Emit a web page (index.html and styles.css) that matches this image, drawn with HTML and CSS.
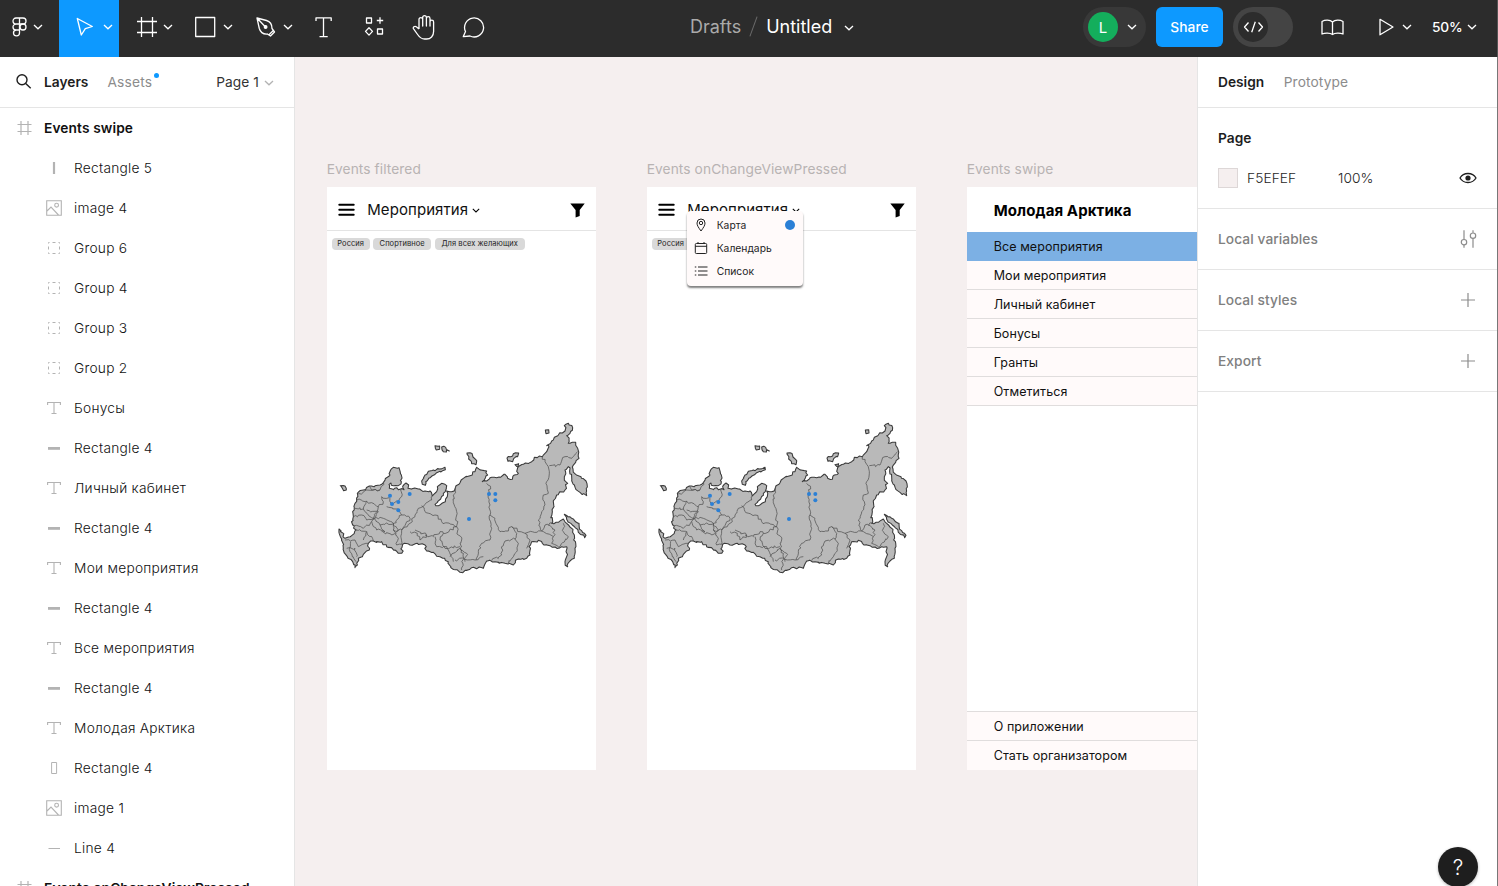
FILE: index.html
```html
<!DOCTYPE html>
<html lang="en">
<head>
<meta charset="utf-8">
<title>Untitled</title>
<link rel="stylesheet" href="styles.css">
</head>
<body>
<svg class="defs" aria-hidden="true">
  <symbol id="chev" viewBox="0 0 10 6"><path d="M1 1l4 3.8L9 1" fill="none" stroke="currentColor" stroke-width="1.3"/></symbol>
  <symbol id="hash" viewBox="0 0 16 16"><path d="M5 1v14M12 1v14M1.500 4.500h14M1.500 11.500h14" fill="none" stroke="currentColor" stroke-width="1.2"/></symbol>
  <symbol id="image" viewBox="0 0 16 16"><g fill="none" stroke="currentColor" stroke-width="1.1"><path d="M.7.7h14.6v14.6H.7zM1 11l4-4 7.5 8"/><circle cx="10.6" cy="5.2" r="1.9"/></g></symbol>
  <symbol id="group" viewBox="0 0 16 16"><path d="M2.500 3.500v-1h1M12.500 2.500h1v1M13.500 12.500v1h-1M3.500 13.500h-1v-1M6.500 2.500h3M6.500 13.500h3M2.500 6.500v3M13.500 6.500v3" fill="none" stroke="currentColor"/></symbol>
  <symbol id="text" viewBox="0 0 16 16"><path d="M1.600 5V2.500h12.800V5M8 2.500v11.300M5.500 13.500h5" fill="none" stroke="currentColor" stroke-width="1.100"/></symbol>
  <symbol id="vbar" viewBox="0 0 16 16"><path d="M8 2v12" stroke="currentColor" stroke-width="2.200"/></symbol>
  <symbol id="hbar" viewBox="0 0 16 16"><path d="M2 8.400h12" stroke="currentColor" stroke-width="2.800"/></symbol>
  <symbol id="line" viewBox="0 0 16 16"><path d="M2.500 8.500h11.500" stroke="currentColor"/></symbol>
  <symbol id="rect" viewBox="0 0 16 16"><path d="M5.600 2.500h5v11h-5z" fill="none" stroke="currentColor"/></symbol>
  <symbol id="plus" viewBox="0 0 16 16"><path d="M8 1v14M1 8h14" stroke="currentColor" stroke-width="1.2"/></symbol>
  <symbol id="burger" viewBox="0 0 17 14"><path d="M1.300 1.700h14.400M1.300 6.700h14.400M1.300 11.700h14.400" stroke="#000" stroke-width="2" stroke-linecap="round"/></symbol>
  <symbol id="funnel" viewBox="0 0 15 15"><path d="M.3.5h14.400L9.700 7v6L5.600 14.600V7z" fill="#000"/></symbol>
  <symbol id="map" viewBox="0 0 795 495">
    <g fill="#b9b9b9" stroke="#3a3a3a" stroke-width="3.200" stroke-linejoin="round">
      <path class="rough" d="M118 213L150 210L165 195L180 180L182 165L190 157L207 158L214 180L214 200L205 212L190 212L183 204L177 208L178 220L190 224L200 218L205 224L222 224L218 214L228 204L236 210L234 220L265 222L285 228L300 228L307 243L320 230L322 215L335 205L345 208L349 218L340 235L332 252L315 268L325 272L346 260L352 245L350 228L365 230L378 212L390 203L400 190L420 182L435 170L440 157L453 165L470 168L473 180L457 200L470 198L480 188L500 188L525 178L533 190L547 193L553 180L565 175L563 158L580 148L605 140L613 127L637 125L650 110L655 90L650 92L665 78L685 60L705 48L703 32L715 25L728 38L720 55L710 62L717 72L715 85L737 82L743 100L747 130L737 142L727 156L737 178L753 185L768 198L770 242L750 232L733 210L725 185L715 155L705 165L703 185L713 205L705 225L680 240L670 260L667 290L665 325L685 322L700 312L710 325L725 340L733 360L735 400L733 430L720 438L713 455L705 440L710 425L710 395L695 395L685 400L660 392L637 385L625 376L605 380L597 395L600 420L590 430L565 432L550 450L525 445L495 440L470 438L460 460L425 458L390 472L362 458L355 440L330 425L310 412L290 408L285 390L262 385L240 390L218 388L215 415L205 415L195 405L170 395L155 380L130 378L115 385L118 405L100 418L85 430L82 450L75 458L68 440L52 425L40 400L35 372L27 342L45 370L65 362L78 345L68 330L68 290L75 265L82 235L100 225Z"/>
      <path class="rough" d="M275 198L285 180L310 165L345 157L346 164L320 173L297 189L287 200L286 211L277 208ZM703 298L725 310L747 325L755 347L768 361L764 368L745 352L727 330L710 313ZM411 114L420 113L429 126L440 137L438 149L425 146L416 132ZM531 129L542 125L550 116L566 114L563 125L551 131L548 140L534 139ZM646 45L656 44L657 54L648 56ZM31 212L45 213L49 225L41 227ZM315 92L329 93L329 103L319 105ZM335 96L347 97L358 108L340 110ZM555 149L566 146L564 155Z"/>
      <path class="rough" fill="none" stroke="#505050" stroke-width="2.200" d="M118 213L125 225L150 225L165 195M82 240L110 225L150 225M80 255L125 263L145 275L160 260L155 245L178 248L183 265L205 260L215 245L212 225M75 280L100 282L108 262M70 305L95 300L110 315L130 310L145 275M70 330L100 340L125 320L145 290L110 285M100 282L115 300L150 330M125 320L140 345L165 350L150 330L190 325L205 345L185 360L155 350M130 310L160 310L190 325L215 300L205 282L170 275M190 325L190 345L215 345L240 310L215 300M190 345L205 370L200 390L215 388L215 345L240 325L255 300L265 280L305 255L307 243M240 350L262 355L270 375L290 360L255 345M275 272L285 290L315 300L335 320L380 335L380 290L370 260L378 215M285 360L310 365L330 350L340 355L380 335M315 365L320 395L350 395L370 440M340 355L330 375L345 400L390 395M380 335L385 360L395 375L390 400L400 415L395 465M390 400L360 425M78 345L110 350L130 378M45 375L75 375L85 395L115 385M50 400L75 400L80 425M62 380L60 410L78 440M110 350L100 375"/>
      <path class="rough" fill="none" stroke="#505050" stroke-width="2.200" d="M470 205L482 222L475 240L480 270L480 300L485 340L480 375L455 385L445 410L440 435M480 300L495 310L505 340L510 350L535 348L545 335L570 350L585 355L635 348L625 315L635 290L645 270L640 240L655 235L650 200L658 170L650 148L637 125M658 152L690 150L705 125L725 130L743 110M635 348L645 330L670 325M545 335L560 355L555 372L525 378L515 395L515 420L485 437M555 372L565 385L560 410L550 425L535 445M585 355L600 375L590 400M635 348L670 365L675 345L655 330M670 365L665 385L690 395L715 365L700 350L700 325M375 435L400 430L435 435L460 425M390 400L410 415L405 440"/>
    </g>
    <g fill="#2b80d6"><circle cx="180" cy="242" r="6"/><circle cx="239" cy="237" r="6"/><circle cx="186" cy="267" r="6"/><circle cx="205" cy="261" r="6"/><circle cx="205" cy="286" r="6"/><circle cx="477" cy="237" r="6"/><circle cx="496" cy="237" r="6"/><circle cx="496" cy="256" r="6"/><circle cx="417" cy="312" r="6"/></g>
  </symbol>
</svg>
<script src="coast.js"></script>
<div class="app">
  <header class="toolbar">
    <div class="tool tool-menu">
      <svg width="15" height="20" viewBox="0 0 15 20" class="ico"><path d="M7.500 1H4a3 3 0 0 0 0 6h3.500zM7.500 1H11a3 3 0 0 1 0 6H7.500zM7.500 7H4a3 3 0 0 0 0 6h3.500zM7.500 13H4a3 3 0 1 0 3.500 3z"/><circle cx="11" cy="10" r="3"/></svg>
      <svg class="chev"><use href="#chev"/></svg></div>
    <div class="tool tool-active">
      <svg width="18" height="20" viewBox="0 0 18 20" class="ico"><path d="M1.300 1.500l15 8-7 2.200-4 6.300z"/></svg>
      <svg class="chev"><use href="#chev"/></svg></div>
    <div class="tool">
      <svg width="22" height="22" viewBox="0 0 22 22" class="ico"><path d="M6.500 1v20M17.500 1v20M2 5.500h20M2 16.500h20"/></svg>
      <svg class="chev"><use href="#chev"/></svg></div>
    <div class="tool">
      <svg width="22" height="22" viewBox="0 0 22 22" class="ico"><path d="M.7 1.500h19v19H.7z"/></svg>
      <svg class="chev"><use href="#chev"/></svg></div>
    <div class="tool">
      <svg width="22" height="22" viewBox="0 0 22 22" class="ico"><path d="M2 2l9.500 2.500c3.500 1 5.500 4 5.500 8l2.500 3.500-4 4L12.300 18c-4 .3-7-2-8-5.500zM2 2l8 8.500M14 18.800l4.300-4.300"/><circle cx="10.600" cy="11" r="1.300" fill="#fff"/></svg>
      <svg class="chev"><use href="#chev"/></svg></div>
    <div class="tool tool-single"><svg width="18" height="22" viewBox="0 0 18 22" class="ico"><path d="M1 5V1.800h15.200V5M8.500 1.800v18.800M4.500 20.600h8.200"/></svg></div>
    <div class="tool tool-single"><svg width="20" height="20" viewBox="0 0 20 20" class="ico"><path d="M2.500 1h5v5h-5zM13.500 12h5v5h-5zM5 10.700l3.500 3.700L5 18.100l-3.500-3.700zM16 .3v6.400M12.800 3.500h6.400"/></svg></div>
    <div class="tool tool-single"><svg width="24" height="26" viewBox="0 0 24 26" class="ico"><path d="M7 15V5a1.900 1.900 0 0 1 3.700 0v7V3a1.900 1.900 0 0 1 3.700 0v9V4.500a1.800 1.800 0 0 1 3.600 0V12V8a1.800 1.800 0 0 1 3.600 0v9.500c0 4.500-3 7.500-7 7.500h-2c-3 0-5-1.500-7-4.500l-4-5.700c-1-1.500 1-3.200 2.700-2.100L7 15"/></svg></div>
    <div class="tool tool-single"><svg width="24" height="22" viewBox="0 0 24 22" class="ico"><path d="M1.300 20.600L3.500 15.500A9.500 9.500 0 1 1 8 20z"/></svg></div>
    <div class="title"><span class="muted-title">Drafts</span><span class="slash"></span><span>Untitled</span><svg class="chev"><use href="#chev"/></svg></div>
    <div class="actions">
      <div class="user"><span class="avatar">L</span><svg class="chev"><use href="#chev"/></svg></div>
      <div class="share">Share</div>
      <div class="switch"><span class="knob"><svg width="20" height="12" viewBox="0 0 20 12" class="ico"><path d="M5 1.500L1 6l4 4.500M15 1.500L19 6l-4 4.500M11.800.8L8.200 11.200"/></svg></span></div>
      <svg class="ico book" width="23" height="17" viewBox="0 0 23 17"><path d="M11.500 15.500V3C9 .6 4 .6 1 2.500v12.500c3-1.300 8-1.300 10.500.5 2.500-1.800 7.500-1.800 10.500-.5V2.500C19 .6 14 .6 11.500 3"/></svg>
      <svg class="ico play" width="15" height="18" viewBox="0 0 15 18"><path d="M1 1.300l13 7.700L1 16.800z"/></svg>
      <svg class="chev"><use href="#chev"/></svg>
      <span class="zoom">50%</span><svg class="chev"><use href="#chev"/></svg>
    </div>
  </header>
  <main class="body">
    <aside class="left">
      <div class="tabs">
        <svg class="search" width="16" height="16" viewBox="0 0 16 16"><circle cx="6" cy="5.800" r="5"/><path d="M9.700 9.500l5 4.800"/></svg>
        <b>Layers</b><span class="assets">Assets<i></i></span><span class="page-name">Page 1</span><svg class="chev pale"><use href="#chev"/></svg>
      </div>
      <div class="layers">
        <div class="layer top"><svg><use href="#hash"/></svg>Events swipe</div>
        <div class="layer"><svg><use href="#vbar"/></svg>Rectangle 5</div>
        <div class="layer"><svg><use href="#image"/></svg>image 4</div>
        <div class="layer"><svg><use href="#group"/></svg>Group 6</div>
        <div class="layer"><svg><use href="#group"/></svg>Group 4</div>
        <div class="layer"><svg><use href="#group"/></svg>Group 3</div>
        <div class="layer"><svg><use href="#group"/></svg>Group 2</div>
        <div class="layer"><svg><use href="#text"/></svg>Бонусы</div>
        <div class="layer"><svg><use href="#hbar"/></svg>Rectangle 4</div>
        <div class="layer"><svg><use href="#text"/></svg>Личный кабинет</div>
        <div class="layer"><svg><use href="#hbar"/></svg>Rectangle 4</div>
        <div class="layer"><svg><use href="#text"/></svg>Мои мероприятия</div>
        <div class="layer"><svg><use href="#hbar"/></svg>Rectangle 4</div>
        <div class="layer"><svg><use href="#text"/></svg>Все мероприятия</div>
        <div class="layer"><svg><use href="#hbar"/></svg>Rectangle 4</div>
        <div class="layer"><svg><use href="#text"/></svg>Молодая Арктика</div>
        <div class="layer"><svg><use href="#rect"/></svg>Rectangle 4</div>
        <div class="layer"><svg><use href="#image"/></svg>image 1</div>
        <div class="layer"><svg><use href="#line"/></svg>Line 4</div>
        <div class="layer top"><svg><use href="#hash"/></svg>Events onChangeViewPressed</div>
      </div>
    </aside>
    <section class="canvas">
      <div class="artboard first">
        <div class="label">Events filtered</div>
        <div class="screen">
          <div class="bar"><svg class="burger"><use href="#burger"/></svg><span>Мероприятия</span><svg class="mini"><use href="#chev"/></svg><svg class="funnel"><use href="#funnel"/></svg></div>
          <div class="chips"><span class="chip c1">Россия</span><span class="chip c2">Спортивное</span><span class="chip c3">Для всех желающих</span></div>
          <svg class="map"><use href="#map"/></svg>
        </div>
      </div>
      <div class="artboard second">
        <div class="label">Events onChangeViewPressed</div>
        <div class="screen">
          <div class="bar"><svg class="burger"><use href="#burger"/></svg><span>Мероприятия</span><svg class="mini"><use href="#chev"/></svg><svg class="funnel"><use href="#funnel"/></svg></div>
          <div class="chips"><span class="chip c1">Россия</span></div>
          <svg class="map"><use href="#map"/></svg>
          <div class="popup">
            <div><svg viewBox="0 0 14 14"><path d="M7 13C4.500 9.500 3 7.500 3 5a4 4 0 0 1 8 0c0 2.500-1.500 4.500-4 8z"/><circle cx="7" cy="5" r="1.700"/></svg>Карта<i></i></div>
            <div><svg viewBox="0 0 14 14"><path d="M2.300 2.500h9.400q1 0 1 1v8q0 1-1 1H2.300q-1 0-1-1v-8q0-1 1-1zM1.300 5.300h11.400M4 1v2M10 1v2"/></svg>Календарь</div>
            <div><svg viewBox="0 0 14 14"><path stroke-width="1.200" d="M4 3h9.500M4 7h9.500M4 11h9.500M.8 3h1.500M.8 7h1.500M.8 11h1.500"/></svg>Список</div>
          </div>
        </div>
      </div>
      <div class="artboard third">
        <div class="label">Events swipe</div>
        <div class="screen nav">
          <h2>Молодая Арктика</h2>
          <div class="item selected">Все мероприятия</div>
          <div class="item">Мои мероприятия</div>
          <div class="item">Личный кабинет</div>
          <div class="item">Бонусы</div>
          <div class="item">Гранты</div>
          <div class="item">Отметиться</div>
          <div class="foot"><div class="item">О приложении</div><div class="item">Стать организатором</div></div>
        </div>
      </div>
    </section>
    <aside class="right">
      <div class="tabs"><b>Design</b><span>Prototype</span></div>
      <div class="page">
        <b>Page</b>
        <div class="fill"><i></i><span class="hex">F5EFEF</span><span>100%</span>
          <svg width="18" height="12" viewBox="0 0 18 12"><path d="M1 6c3.500-6 12.500-6 16 0-3.500 6-12.500 6-16 0z" fill="none" stroke="#1e1e1e" stroke-width="1.300"/><circle cx="9" cy="6" r="2.600" fill="#1e1e1e"/></svg></div>
      </div>
      <div class="row">Local variables<svg viewBox="0 0 18 18"><g fill="none" stroke="currentColor" stroke-width="1.200"><path d="M5 .3v9.200M5 15v2.700M14 .3v2.500M14 8.500v9.200"/><circle cx="5" cy="12.200" r="2.700"/><circle cx="14" cy="5.700" r="2.700"/></g></svg></div>
      <div class="row">Local styles<svg><use href="#plus"/></svg></div>
      <div class="row">Export<svg><use href="#plus"/></svg></div>
      <div class="help">?</div>
    </aside>
  </main>
</div>
</body>
</html>
```
FILE: coast.js
```js
// Splits the straight map segments and offsets each point, so coasts and borders look irregular.
function wobble(x, y, k) {
  const v = Math.sin(x * 12.9898 + y * 78.233 + k) * 43758.5453;
  return (v - Math.floor(v) - 0.5) * 8;
}
document.querySelectorAll(".rough").forEach((path) => {
  const subpaths = path.getAttribute("d").split("M").filter(Boolean);
  path.setAttribute("d", subpaths.map((sub) => {
    const closed = sub.includes("Z");
    const pts = sub.replace("Z", "").split("L").map((p) => p.trim().split(" ").map(Number));
    if (closed) pts.push(pts[0]);
    const out = [pts[0]];
    for (let i = 1; i < pts.length; i++) {
      const [ax, ay] = pts[i - 1];
      const [bx, by] = pts[i];
      const n = Math.max(1, Math.round(Math.hypot(bx - ax, by - ay) / 7));
      for (let j = 1; j < n; j++) {
        const x = ax + (bx - ax) * j / n;
        const y = ay + (by - ay) * j / n;
        out.push([x + wobble(x, y, 0), y + wobble(x, y, 5)]);
      }
      out.push([bx, by]);
    }
    return "M" + out.map((p) => p[0].toFixed(1) + " " + p[1].toFixed(1)).join("L") + (closed ? "Z" : "");
  }).join(""));
});
```
FILE: styles.css
```css
* { box-sizing: border-box; }
body { margin: 0; font-family: Inter, "Open Sans", sans-serif; font-size: 13.75px; letter-spacing: .07px; color: #1e1e1e; }
b { font-weight: 600; letter-spacing: 0; }
svg { flex: none; display: block; }
.defs { position: absolute; width: 0; height: 0; }
.app { width: 1498px; height: 886px; overflow: hidden; display: flex; flex-direction: column; background: #fff; }
.toolbar { height: 57px; flex: none; background: #2c2c2c; color: #fff; display: flex; align-items: stretch; border-right: 1px solid #555; padding-bottom: 3px; position: relative; }
.ico { fill: none; stroke: #fff; stroke-width: 1.3; stroke-linejoin: round; }
.chev { width: 10px; height: 6px; color: #fff; }
.tool { width: 60px; display: flex; align-items: center; justify-content: flex-end; gap: 6px; padding-right: 6px; }
.tool-menu { width: 59px; justify-content: flex-start; padding-left: 12px; gap: 6px; }
.tool-active { background: #0d99ff; margin-bottom: -3px; padding-bottom: 3px; gap: 9px; }
.tool-single { width: 50px; justify-content: center; padding: 0; }
.title { position: absolute; left: 690px; top: 0; height: 53px; display: flex; align-items: center; font-size: 18px; letter-spacing: 0; }
.muted-title { color: #aaa; }
.slash { width: 1px; height: 21px; background: #6b6b6b; transform: rotate(20deg); margin: 0 12px; }
.title .chev { margin: 2px 0 0 12px; }
.actions { margin-left: auto; display: flex; align-items: center; padding-right: 20px; }
.user { width: 63px; height: 40px; border-radius: 20px; background: #383838; display: flex; align-items: center; padding-left: 5px; gap: 9px; margin-right: 10px; }
.avatar { width: 30px; height: 30px; border-radius: 50%; background: #14ae5c; display: grid; place-items: center; font-size: 15px; }
.share { width: 67px; height: 40px; border-radius: 6px; background: #0d99ff; display: grid; place-items: center; font-size: 13.75px; font-weight: 500; margin-right: 10px; }
.switch { width: 60px; height: 40px; border-radius: 20px; background: #444; padding: 5px; margin-right: 28px; }
.knob { width: 30px; height: 30px; border-radius: 50%; background: #2c2c2c; display: grid; place-items: center; padding-right: 0; }
.knob svg { transform: translateX(0.5px); }
.book { margin-right: 35px; }
.play { margin-right: 8px; }
.zoom { margin: 0 6px 0 20px; font-size: 13.75px; font-weight: 500; letter-spacing: -.5px; width: 29px; letter-spacing: -.2px; }
.body { flex: 1; min-height: 0; display: flex; }
.left { width: 295px; border-right: 1px solid #e5e5e5; overflow: hidden; }
.tabs { height: 51px; border-bottom: 1px solid #e5e5e5; display: flex; align-items: center; }
.left .tabs { padding-left: 16px; }
.search { fill: none; stroke: #1e1e1e; stroke-width: 1.4; margin-right: 12px; }
.assets { color: #8c8c8c; margin-left: 19px; position: relative; letter-spacing: .2px; }
.assets i { position: absolute; width: 5px; height: 5px; border-radius: 50%; background: #0d99ff; right: -7px; top: -1px; }
.page-name { margin-left: auto; color: #333; }
.pale { color: #b3b3b3; margin: 1px 20px 0 5px; }
.layer { height: 40px; display: flex; align-items: center; gap: 12px; padding-left: 46px; font-weight: 300; letter-spacing: .25px; white-space: nowrap; color: #111; }
.layer svg { width: 16px; height: 16px; color: #b3b3b3; }
.layer.top { padding-left: 16px; font-weight: 600; letter-spacing: .1px; }
.canvas { flex: 1; min-width: 0; position: relative; overflow: hidden; background: #f5efef; }
.artboard { position: absolute; top: 104px; width: 269.5px; }
.first { left: 31.7px; }
.second { left: 351.7px; }
.third { left: 671.7px; }
.label { height: 26px; line-height: 17px; color: #b8b3b3; font-size: 13.75px; letter-spacing: .08px; }
.screen { height: 583px; background: #fff; position: relative; }
.bar { height: 44px; border-bottom: 1px solid #e4e4e4; display: flex; align-items: center; padding: 2px 11px 0; font-size: 15px; letter-spacing: .08px; color: #111; }
.burger { width: 17px; height: 14px; margin-right: 12.5px; }
.mini { width: 8px; height: 5px; margin: 2px 0 0 4px; color: #000; }
.funnel { width: 15px; height: 15px; margin: 2px 0 0 auto; }
.chips { display: flex; gap: 3.5px; padding: 7px 5px 0; }
.chip { height: 12px; border-radius: 4px; background: #d9d9d9; font-size: 7.5px; line-height: 12px; text-align: center; white-space: nowrap; letter-spacing: .06px; }
.c1 { width: 38px; }
.c2 { width: 58px; }
.c3 { width: 90px; }
.map { width: 265px; height: 165px; margin: 165px 0 0 3px; }
.popup { position: absolute; left: 40px; top: 24px; width: 116px; height: 75px; border-radius: 4px; background: #fffafa; box-shadow: 0 2px 2px rgba(0,0,0,.5); padding: 2px 8px 0 7px; font-size: 10.3px; letter-spacing: 0; }
.popup div { height: 23.4px; display: flex; align-items: center; gap: 9px; }
.popup svg { width: 14px; height: 14px; fill: none; stroke: #222; stroke-width: 1; }
.popup i { width: 10px; height: 10px; border-radius: 50%; background: #2b80d6; margin-left: auto; margin-top: 1px; }
.nav { display: flex; flex-direction: column; font-size: 12.5px; letter-spacing: .08px; color: #111; }
h2 { margin: 0; height: 45px; line-height: 47px; padding-left: 27px; font-size: 15px; font-weight: 700; letter-spacing: .1px; color: #000; }
.item { height: 29px; line-height: 30px; border-bottom: 1px solid #e0dddd; background: #fffafa; padding-left: 27px; }
.selected { background: #7cb0e4; border-color: #7cb0e4; }
.foot { margin-top: auto; border-top: 1px solid #e0dddd; }
.foot .item:last-child { border: 0; }
.right { width: 301px; border-left: 1px solid #e5e5e5; border-right: 1px solid #777; position: relative; }
.right .tabs { padding-left: 20px; gap: 19.5px; }
.right .tabs span { color: #8c8c8c; letter-spacing: .1px; }
.page { height: 101px; border-bottom: 1px solid #e5e5e5; padding: 22px 20px 0; }
.page b { display: block; line-height: 17px; }
.fill { display: flex; align-items: center; margin-top: 21px; height: 20px; }
.fill i { width: 20px; height: 20px; border: 1px solid #ddd7d7; background: #f5efef; margin-right: 9px; }
.fill span { font-weight: 300; }
.hex { width: 91px; }
.fill svg { margin-left: auto; }
.row { height: 61px; border-bottom: 1px solid #e5e5e5; padding: 0 21px 0 20px; display: flex; align-items: center; justify-content: space-between; color: #808080; font-weight: 500; }
.row svg { width: 16px; height: 16px; color: #8c8c8c; }
.row:nth-child(3) { padding-right: 20px; }
.row:nth-child(3) svg { width: 18px; height: 18px; }
.help { position: absolute; right: 19px; bottom: -1px; width: 40px; height: 40px; border-radius: 50%; background: #1e1e1e; color: #fff; display: grid; place-items: center; font-size: 21px; font-weight: 300; box-shadow: 0 1px 3px rgba(0,0,0,.3); }
```
